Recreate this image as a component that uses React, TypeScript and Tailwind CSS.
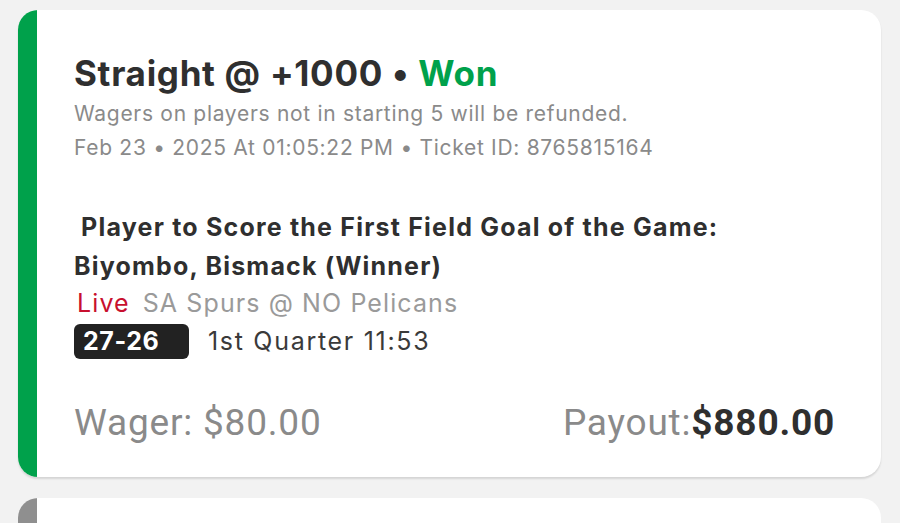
export default function App() {
  return (
    <div
      className="min-h-screen w-full bg-[#f2f2f2] px-[18px] pt-[10px]"
      style={{ fontFamily: 'Inter, "Noto Sans", sans-serif' }}
    >
      {/* Bet card */}
      <div className="flex w-[863px] overflow-hidden rounded-[20px] bg-white shadow-[0_2px_2px_rgba(0,0,0,0.12)]">
        <div className="w-[19px] shrink-0 bg-[#00a14b]" />
        <div className="flex-1 pl-[37px] pr-[46px] pt-[41px] pb-[32px]">
          <h1 className="text-[35px] font-bold leading-[44px] tracking-[0.7px] text-[#2f2f2f]">
            Straight @ +1000 • <span className="text-[#00a14b]">Won</span>
          </h1>
          <p className="mt-[2px] text-[21px] leading-[34px] tracking-[0.7px] text-[#8a8a8a]">
            Wagers on players not in starting 5 will be refunded.
          </p>
          <p className="text-[21px] leading-[34px] tracking-[0.7px] text-[#8a8a8a]">
            Feb 23 • 2025 At 01:05:22 PM • Ticket ID: 8765815164
          </p>

          <div className="mt-[43px] text-[25px] font-bold leading-[39px] tracking-[1.2px] text-[#2f2f2f]">
            <p>&nbsp;Player to Score the First Field Goal of the Game:</p>
            <p>Biyombo, Bismack (Winner)</p>
          </div>
          <p className="pl-[3px] text-[25px] leading-[34px] tracking-[1.1px]">
            <span className="text-[#c8102e]">Live</span>
            <span className="ml-[13px] text-[#9a9a9a]">SA Spurs @ NO Pelicans</span>
          </p>
          <div className="mt-[4px] flex items-center gap-[19px]">
            <span className="inline-flex h-[35px] w-[115px] items-center rounded-[6px] bg-[#222222] pl-[9px] text-[25px] font-bold tracking-[0.6px] text-white">
              27-26
            </span>
            <span className="text-[25px] leading-[35px] tracking-[1.7px] text-[#3a3a3a]">1st Quarter 11:53</span>
          </div>

          <div
            className="mt-[42px] flex items-baseline justify-between text-[37px] leading-[44px] tracking-[0.8px]"
            style={{ fontFamily: 'Roboto, "Liberation Sans", sans-serif' }}
          >
            <span className="text-[#8a8a8a]">Wager: $80.00</span>
            <span className="text-[#8a8a8a]">
              Payout:<span className="font-bold text-[#2f2f2f]">$880.00</span>
            </span>
          </div>
        </div>
      </div>

      {/* Next card (partially visible) */}
      <div className="mt-[21px] flex h-[120px] w-[863px] overflow-hidden rounded-[20px] bg-white">
        <div className="w-[19px] shrink-0 bg-[#8f8f8f]" />
        <div className="flex-1" />
      </div>
    </div>
  )
}
